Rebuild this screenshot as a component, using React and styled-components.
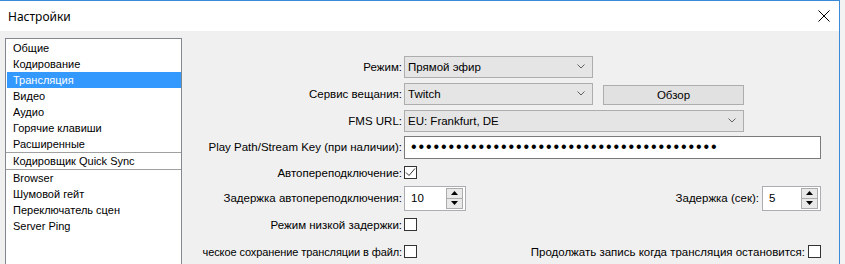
import React from 'react'
import styled, { createGlobalStyle } from 'styled-components'

const GlobalStyle = createGlobalStyle`
  html, body {
    margin: 0;
    padding: 0;
    background: #f3f3f3;
  }
  * {
    box-sizing: border-box;
  }
`

const Window = styled.div`
  width: 840px;
  height: 264px;
  display: flex;
  flex-direction: column;
  overflow: hidden;
  border-top: 1px solid #3b8ad8;
  border-right: 1px solid #3b8ad8;
  font-family: 'Liberation Sans', Arial, sans-serif;
  font-size: 11px;
  color: #000;
`

const TitleBar = styled.div`
  height: 30px;
  flex: none;
  display: flex;
  align-items: center;
  justify-content: space-between;
  padding: 0 9px 0 8px;
  background: #fff;
`

const Title = styled.span`
  font-family: 'Noto Sans', 'Open Sans', sans-serif;
  font-size: 12px;
`

const Body = styled.div`
  flex: 1;
  display: flex;
  min-height: 0;
  padding: 7px 0 0 5px;
  background: #f0f0f0;
`

const List = styled.div`
  width: 177px;
  flex: none;
  padding-top: 1px;
  margin-bottom: -20px;
  background: #fff;
  border: 1px solid #828790;
`

const Item = styled.div`
  height: 16px;
  line-height: 16px;
  padding-left: 6px;
  margin-left: 1px;
  color: ${({ selected }) => (selected ? '#fff' : '#000')};
  background: ${({ selected }) => (selected ? '#3399ff' : 'transparent')};
  white-space: nowrap;
`

const Separator = styled.div`
  height: 1px;
  background: #a0a0a0;
`

const Pane = styled.div`
  flex: 1;
  min-width: 0;
  overflow: hidden;
  margin-left: 14px;
  padding: 15px 18px 0 0;
  font-size: 11.5px;
`

const Row = styled.div`
  height: ${({ h }) => h}px;
  display: flex;
  align-items: center;
`

const Label = styled.div`
  width: 206px;
  flex: none;
  display: flex;
  justify-content: flex-end;
  white-space: nowrap;
  margin-right: 2px;
  font-size: ${({ tight }) => (tight ? '11px' : 'inherit')};
  letter-spacing: ${({ tight }) => (tight ? '-0.1px' : 'normal')};
`

const SideLabel = styled.span`
  margin-left: auto;
  margin-right: 3px;
  white-space: nowrap;
`

const Select = styled.div`
  width: ${({ w }) => w}px;
  height: 22px;
  display: flex;
  align-items: center;
  justify-content: space-between;
  padding: 0 7px 0 3px;
  background: #e5e5e5;
  border: 1px solid #adadad;
`

const Button = styled.div`
  width: 141px;
  height: 20px;
  margin-left: 10px;
  margin-top: 2px;
  display: flex;
  align-items: center;
  justify-content: center;
  background: #e1e1e1;
  border: 1px solid #adadad;
`

const KeyInput = styled.div`
  flex: 1;
  height: 23px;
  display: flex;
  align-items: center;
  padding-left: 6px;
  background: #fff;
  border: 1px solid #7a7a7a;
  overflow: hidden;
  white-space: nowrap;
  font-size: 16px;
  letter-spacing: 1.9px;
`

const Box = styled.div`
  width: 13px;
  height: 13px;
  flex: none;
  background: #fff;
  border: 1px solid #333;
  display: flex;
  align-items: center;
  justify-content: center;
`

const Spin = styled.div`
  width: ${({ w }) => w}px;
  height: 25px;
  flex: none;
  display: flex;
  align-items: center;
  justify-content: space-between;
  padding: 1px 2px 1px 6px;
  background: #fff;
  border: 1px solid #abadb3;
`

const SpinButtons = styled.div`
  width: 17px;
  height: 100%;
  display: flex;
  flex-direction: column;
`

const SpinButton = styled.div`
  flex: 1;
  display: flex;
  align-items: center;
  justify-content: center;
  background: #e9e9e9;
  border: 1px solid #acacac;
  & + & {
    border-top: none;
  }
`

const Chevron = () => (
  <svg width="8" height="5" viewBox="0 0 8 5">
    <polyline points="0.5,0.5 4,4 7.5,0.5" fill="none" stroke="#606060" strokeWidth="1" />
  </svg>
)

const Close = () => (
  <svg width="12" height="12" viewBox="0 0 12 12">
    <path d="M0.5 0.5 L11.5 11.5 M11.5 0.5 L0.5 11.5" stroke="#000" strokeWidth="1" />
  </svg>
)

const Check = () => (
  <svg width="11" height="11" viewBox="0 0 11 11">
    <polyline points="1,5.5 4,8.5 10,1.5" fill="none" stroke="#333" strokeWidth="1" />
  </svg>
)

const Triangle = ({ up }) => (
  <svg width="7" height="4" viewBox="0 0 7 4">
    <polygon points={up ? '3.5,0 7,4 0,4' : '0,0 7,0 3.5,4'} fill="#000" />
  </svg>
)

const Checkbox = ({ checked }) => <Box>{checked && <Check />}</Box>

const SpinBox = ({ w, value }) => (
  <Spin w={w}>
    <span>{value}</span>
    <SpinButtons>
      <SpinButton>
        <Triangle up />
      </SpinButton>
      <SpinButton>
        <Triangle />
      </SpinButton>
    </SpinButtons>
  </Spin>
)

const sections = [
  ['Общие', 'Кодирование', 'Трансляция', 'Видео', 'Аудио', 'Горячие клавиши', 'Расширенные'],
  ['Кодировщик Quick Sync'],
  ['Browser', 'Шумовой гейт', 'Переключатель сцен', 'Server Ping'],
]

const App = () => (
  <>
    <GlobalStyle />
    <Window>
      <TitleBar>
        <Title>Настройки</Title>
        <Close />
      </TitleBar>
      <Body>
        <List>
          {sections.map((group, gi) => (
            <React.Fragment key={gi}>
              {gi > 0 && <Separator />}
              {group.map(name => (
                <Item key={name} selected={name === 'Трансляция'}>
                  {name}
                </Item>
              ))}
            </React.Fragment>
          ))}
        </List>
        <Pane>
          <Row h={27}>
            <Label>Режим:</Label>
            <Select w={189}>
              <span>Прямой эфир</span>
              <Chevron />
            </Select>
          </Row>
          <Row h={27}>
            <Label>Сервис вещания:</Label>
            <Select w={189}>
              <span>Twitch</span>
              <Chevron />
            </Select>
            <Button>Обзор</Button>
          </Row>
          <Row h={27}>
            <Label>FMS URL:</Label>
            <Select w={340}>
              <span>EU: Frankfurt, DE</span>
              <Chevron />
            </Select>
          </Row>
          <Row h={26}>
            <Label>Play Path/Stream Key (при наличии):</Label>
            <KeyInput>{'•'.repeat(41)}</KeyInput>
          </Row>
          <Row h={25}>
            <Label>Автопереподключение:</Label>
            <Checkbox checked />
          </Row>
          <Row h={26}>
            <Label>Задержка автопереподключения:</Label>
            <SpinBox w={62} value="10" />
            <SideLabel>Задержка (сек):</SideLabel>
            <SpinBox w={59} value="5" />
          </Row>
          <Row h={27}>
            <Label>Режим низкой задержки:</Label>
            <Checkbox />
          </Row>
          <Row h={27}>
            <Label tight>ческое сохранение трансляции в файл:</Label>
            <Checkbox />
            <SideLabel>Продолжать запись когда трансляция остановится:</SideLabel>
            <Checkbox />
          </Row>
        </Pane>
      </Body>
    </Window>
  </>
)

export default App
